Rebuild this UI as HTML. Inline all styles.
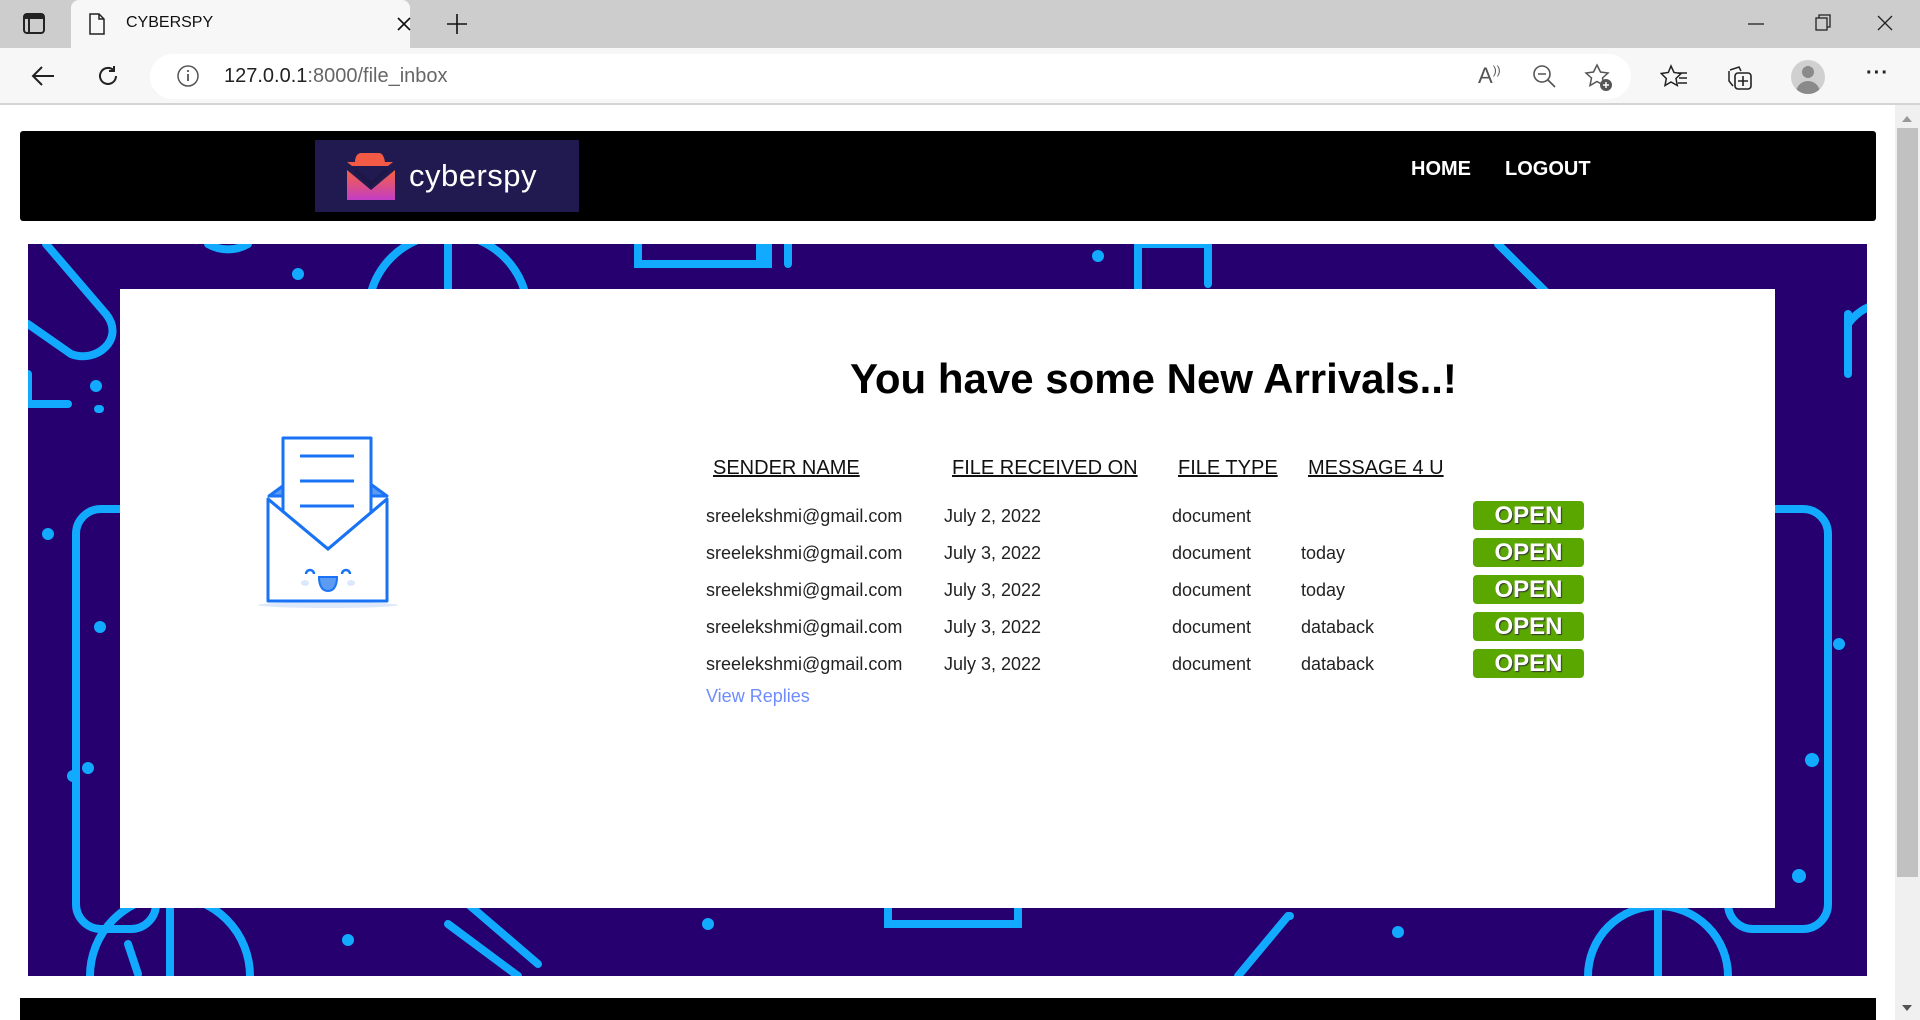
<!DOCTYPE html>
<html><head><meta charset="utf-8"><style>
*{margin:0;padding:0;box-sizing:border-box}
body{width:1920px;height:1020px;overflow:hidden;background:#fff;font-family:"Liberation Sans",sans-serif;position:relative}
.abs{position:absolute}
.tabbar{left:0;top:0;width:1920px;height:48px;background:#cdcdcd}
.tab{left:71px;top:0;width:339px;height:48px;background:#f7f7f7;border-radius:8px 8px 0 0}
.addr{left:0;top:48px;width:1920px;height:57px;background:#f7f7f7;border-bottom:2px solid #d4d4d4}
.pill{left:150px;top:54px;width:1481px;height:45px;background:#fff;border-radius:23px}
.nav{left:20px;top:131px;width:1856px;height:90px;background:#000;border-radius:3px}
.logo{left:315px;top:140px;width:264px;height:72px;background:#201a50}
.navlink{color:#fff;font-size:20px;font-weight:bold;top:158px}
.purple{left:28px;top:244px;width:1839px;height:732px;background:#26006e;overflow:hidden}
.card{left:120px;top:289px;width:1655px;height:619px;background:#fff}
.h1{left:850px;top:355px;width:610px;font-size:42px;font-weight:bold;color:#000;white-space:nowrap}
.th{top:457px;font-size:20px;color:#111;text-decoration:underline;white-space:nowrap}
.td{font-size:18px;color:#222;white-space:nowrap}
.btn{left:1473px;width:111px;height:29px;background:#5aa700;border-radius:4px;color:#fff;font-weight:bold;font-size:24px;text-align:center;line-height:29px;text-shadow:1px 1px 1px #333}
.scroll{left:1895px;top:105px;width:25px;height:915px;background:#f0f0f0}
</style></head><body>
<div class="abs tabbar"></div>
<div class="abs tab"></div>
<svg class="abs" style="left:22px;top:12px" width="26" height="24"><rect x="2" y="2" width="20" height="19" rx="3" fill="none" stroke="#222" stroke-width="2"/><rect x="2" y="2" width="20" height="5" fill="#222"/><line x1="7" y1="7" x2="7" y2="21" stroke="#222" stroke-width="2"/></svg>
<svg class="abs" style="left:88px;top:13px" width="18" height="22"><path d="M2 1h9l5 5v15H2z M11 1v5h5" fill="none" stroke="#222" stroke-width="1.5"/></svg>
<div class="abs" style="left:126px;top:14px;font-size:16px;color:#111">CYBERSPY</div>
<svg class="abs" style="left:397px;top:17px" width="14" height="14"><path d="M1 1L13 13M13 1L1 13" stroke="#111" stroke-width="1.6"/></svg>
<svg class="abs" style="left:446px;top:13px" width="22" height="22"><path d="M11 1v20M1 11h20" stroke="#111" stroke-width="1.6"/></svg>
<svg class="abs" style="left:1738px;top:14px" width="170" height="20"><path d="M10 10h16" stroke="#222" stroke-width="1.3"/><rect x="78" y="4" width="11" height="12" fill="none" stroke="#222" stroke-width="1.3"/><path d="M81 4V1h11v12h-3" fill="none" stroke="#222" stroke-width="1.3"/><path d="M140 2l14 14M154 2l-14 14" stroke="#222" stroke-width="1.3"/></svg>
<div class="abs addr"></div>
<div class="abs pill"></div>
<svg class="abs" style="left:30px;top:64px" width="26" height="24"><path d="M24 12H3M12 3l-9 9 9 9" fill="none" stroke="#222" stroke-width="2"/></svg>
<svg class="abs" style="left:96px;top:64px" width="24" height="24"><path d="M20 12a8 8 0 1 1-3-6.3M18 2v5h-5" fill="none" stroke="#222" stroke-width="2"/></svg>
<svg class="abs" style="left:176px;top:64px" width="24" height="24"><circle cx="12" cy="12" r="10" fill="none" stroke="#555" stroke-width="1.5"/><path d="M12 10v7M12 6v2" stroke="#555" stroke-width="1.8"/></svg>
<div class="abs" style="left:224px;top:65px;font-size:20px;color:#222">127.0.0.1<span style="color:#666">:8000/file_inbox</span></div>
<div class="abs" style="left:1478px;top:63px;font-size:22px;color:#555">A<span style="font-size:12px;vertical-align:top">))</span></div>
<svg class="abs" style="left:1532px;top:64px" width="26" height="26"><circle cx="10" cy="10" r="8" fill="none" stroke="#555" stroke-width="1.6"/><path d="M6 10h8M16 16l7 7" stroke="#555" stroke-width="1.6"/></svg>
<svg class="abs" style="left:1584px;top:63px" width="30" height="30"><path d="M13 2l3.5 7 7.5 1-5.5 5 1.5 7.5-7-4-7 4 1.5-7.5L2 10l7.5-1z" fill="none" stroke="#555" stroke-width="1.5"/><circle cx="22" cy="22" r="6" fill="#555"/><path d="M22 19v6M19 22h6" stroke="#fff" stroke-width="1.5"/></svg>
<svg class="abs" style="left:1660px;top:64px" width="30" height="26"><path d="M11 2l3 6.5 7 1-5 5 1.3 7-6.3-3.5L5 21.5l1.3-7-5-5 7-1z" fill="none" stroke="#222" stroke-width="1.5"/><path d="M18 9h9M19 14h8M18 19h9" stroke="#222" stroke-width="1.5"/></svg>
<svg class="abs" style="left:1726px;top:64px" width="30" height="28"><path d="M4 6l9-3 2 4" fill="none" stroke="#222" stroke-width="1.5"/><path d="M3 7v10l4 5" fill="none" stroke="#222" stroke-width="1.5"/><rect x="9" y="9" width="16" height="16" rx="3" fill="none" stroke="#222" stroke-width="1.6"/><path d="M17 12v10M12 17h10" stroke="#222" stroke-width="1.6"/></svg>
<div class="abs" style="left:1791px;top:60px;width:34px;height:34px;border-radius:50%;background:#d0d0d0;overflow:hidden"><div style="position:absolute;left:11px;top:6px;width:12px;height:12px;border-radius:50%;background:#8a8a8a"></div><div style="position:absolute;left:5px;top:21px;width:24px;height:16px;border-radius:12px 12px 0 0;background:#8a8a8a"></div></div>
<div class="abs" style="left:1866px;top:62px;font-size:20px;color:#222;letter-spacing:1px;font-weight:bold">···</div>

<div class="abs nav"></div>
<div class="abs logo"></div>
<svg class="abs" style="left:345px;top:148px" width="52" height="54"><defs><linearGradient id="g" x1="0" y1="0" x2="0" y2="1"><stop offset="0" stop-color="#f8613f"/><stop offset="1" stop-color="#c23ec6"/></linearGradient></defs><path d="M10 14c0-6 3-9 6-9h18c3 0 5 3 6 9h8l-5 4H7L2 14z" fill="#f35a45"/><path d="M2 22l24 20 24-20v30H2z" fill="url(#g)"/><path d="M10 22l16 14 16-14" fill="none" stroke="#1d1748" stroke-width="4"/></svg>
<div class="abs" style="left:409px;top:158px;font-size:31px;color:#fff;letter-spacing:0.5px">cyberspy</div>
<div class="abs navlink" style="left:1411px">HOME</div>
<div class="abs navlink" style="left:1505px">LOGOUT</div>

<div class="abs purple">
<svg width="1839" height="732" style="position:absolute;left:0;top:0" fill="none" stroke="#12aaff" stroke-width="8" stroke-linecap="round">
<path d="M18 0l60 70c20 25-10 50-35 40L0 80"/>
<path d="M0 130v30h40M70 165h2"/>
<rect x="48" y="265" width="80" height="420" rx="25"/>
<path d="M340 70a80 80 0 0 1 160 0M420 0v60"/>
<path d="M610 0v20h130V0M760 0v20M732 0v15"/>
<path d="M1110 0v50M1110 0h70v40"/>
<path d="M1470 0l50 50"/>
<path d="M1820 80a50 50 0 0 1 30 -20M1820 70v60"/>
<rect x="1700" y="265" width="100" height="420" rx="25"/>
<path d="M62 732a80 80 0 0 1 160 0M142 664v68M100 700l10 30"/>
<path d="M420 680l70 52M440 660l70 60"/>
<path d="M860 650v30h130v-30"/>
<path d="M1210 732l50-60M1260 672h2"/>
<path d="M1560 732a70 70 0 0 1 140 0M1630 664v68"/>
<path d="M180 0a40 40 0 0 0 40 0"/>
</svg>
<svg width="1839" height="732" style="position:absolute;left:0;top:0" fill="#12aaff">
<circle cx="68" cy="142" r="6"/><circle cx="72" cy="383" r="6"/><circle cx="20" cy="290" r="6"/><circle cx="45" cy="532" r="6"/><circle cx="60" cy="524" r="6"/>
<circle cx="1784" cy="516" r="7"/><circle cx="1771" cy="632" r="7"/><circle cx="1811" cy="400" r="6"/>
<circle cx="680" cy="680" r="6"/><circle cx="1370" cy="688" r="6"/><circle cx="320" cy="696" r="6"/>
<circle cx="1070" cy="12" r="6"/><circle cx="270" cy="30" r="6"/>
</svg>
</div>
<div class="abs card"></div>

<svg class="abs" style="left:255px;top:435px" width="145" height="175">
<ellipse cx="73" cy="170" rx="70" ry="3" fill="#dde9fb"/>
<path d="M14 61L73 18l59 43z" fill="#5b9bf2" stroke="#1a73f5" stroke-width="3" stroke-linejoin="round"/>
<rect x="28" y="3" width="88" height="110" fill="#fff" stroke="#1a73f5" stroke-width="3" stroke-linejoin="round"/>
<path d="M45 21h54M45 46h54M45 71h54" stroke="#1a73f5" stroke-width="3"/>
<path d="M13 64v102h119V64L73 114z" fill="#fff" stroke="#1a73f5" stroke-width="3" stroke-linejoin="round"/>
<path d="M13 64l60 50 59-50" fill="none" stroke="#1a73f5" stroke-width="3"/>
<path d="M51 139a4 4 0 0 1 8 0M87 139a4 4 0 0 1 8 0" fill="none" stroke="#1a73f5" stroke-width="2.5"/>
<path d="M64 142h18c0 10-4 14-9 14s-9-4-9-14z" fill="#5b9bf2" stroke="#1a73f5" stroke-width="2"/>
<ellipse cx="50" cy="148" rx="4" ry="3" fill="#dbe8fb"/><ellipse cx="96" cy="148" rx="4" ry="3" fill="#dbe8fb"/>
</svg>

<div class="abs h1">You have some New Arrivals..!</div>
<div class="abs th" style="left:713px">SENDER NAME</div>
<div class="abs th" style="left:952px">FILE RECEIVED ON</div>
<div class="abs th" style="left:1178px">FILE TYPE</div>
<div class="abs th" style="left:1308px">MESSAGE 4 U</div>

<div class="abs td" style="left:706px;top:506px">sreelekshmi@gmail.com</div><div class="abs td" style="left:944px;top:506px">July 2, 2022</div><div class="abs td" style="left:1172px;top:506px">document</div>
<div class="abs td" style="left:706px;top:543px">sreelekshmi@gmail.com</div><div class="abs td" style="left:944px;top:543px">July 3, 2022</div><div class="abs td" style="left:1172px;top:543px">document</div><div class="abs td" style="left:1301px;top:543px">today</div>
<div class="abs td" style="left:706px;top:580px">sreelekshmi@gmail.com</div><div class="abs td" style="left:944px;top:580px">July 3, 2022</div><div class="abs td" style="left:1172px;top:580px">document</div><div class="abs td" style="left:1301px;top:580px">today</div>
<div class="abs td" style="left:706px;top:617px">sreelekshmi@gmail.com</div><div class="abs td" style="left:944px;top:617px">July 3, 2022</div><div class="abs td" style="left:1172px;top:617px">document</div><div class="abs td" style="left:1301px;top:617px">databack</div>
<div class="abs td" style="left:706px;top:654px">sreelekshmi@gmail.com</div><div class="abs td" style="left:944px;top:654px">July 3, 2022</div><div class="abs td" style="left:1172px;top:654px">document</div><div class="abs td" style="left:1301px;top:654px">databack</div>
<div class="abs td" style="left:706px;top:686px;color:#6e8cff">View Replies</div>

<div class="abs btn" style="top:501px">OPEN</div>
<div class="abs btn" style="top:538px">OPEN</div>
<div class="abs btn" style="top:575px">OPEN</div>
<div class="abs btn" style="top:612px">OPEN</div>
<div class="abs btn" style="top:649px">OPEN</div>

<div class="abs" style="left:20px;top:998px;width:1856px;height:22px;background:#000"></div>
<div class="abs scroll"></div>
<div class="abs" style="left:1897px;top:128px;width:21px;height:749px;background:#c1c1c1"></div>
<svg class="abs" style="left:1900px;top:114px" width="14" height="10"><path d="M2 8l5-6 5 6z" fill="#999"/></svg>
<svg class="abs" style="left:1900px;top:1003px" width="14" height="10"><path d="M2 2l5 6 5-6z" fill="#555"/></svg>
</body></html>
